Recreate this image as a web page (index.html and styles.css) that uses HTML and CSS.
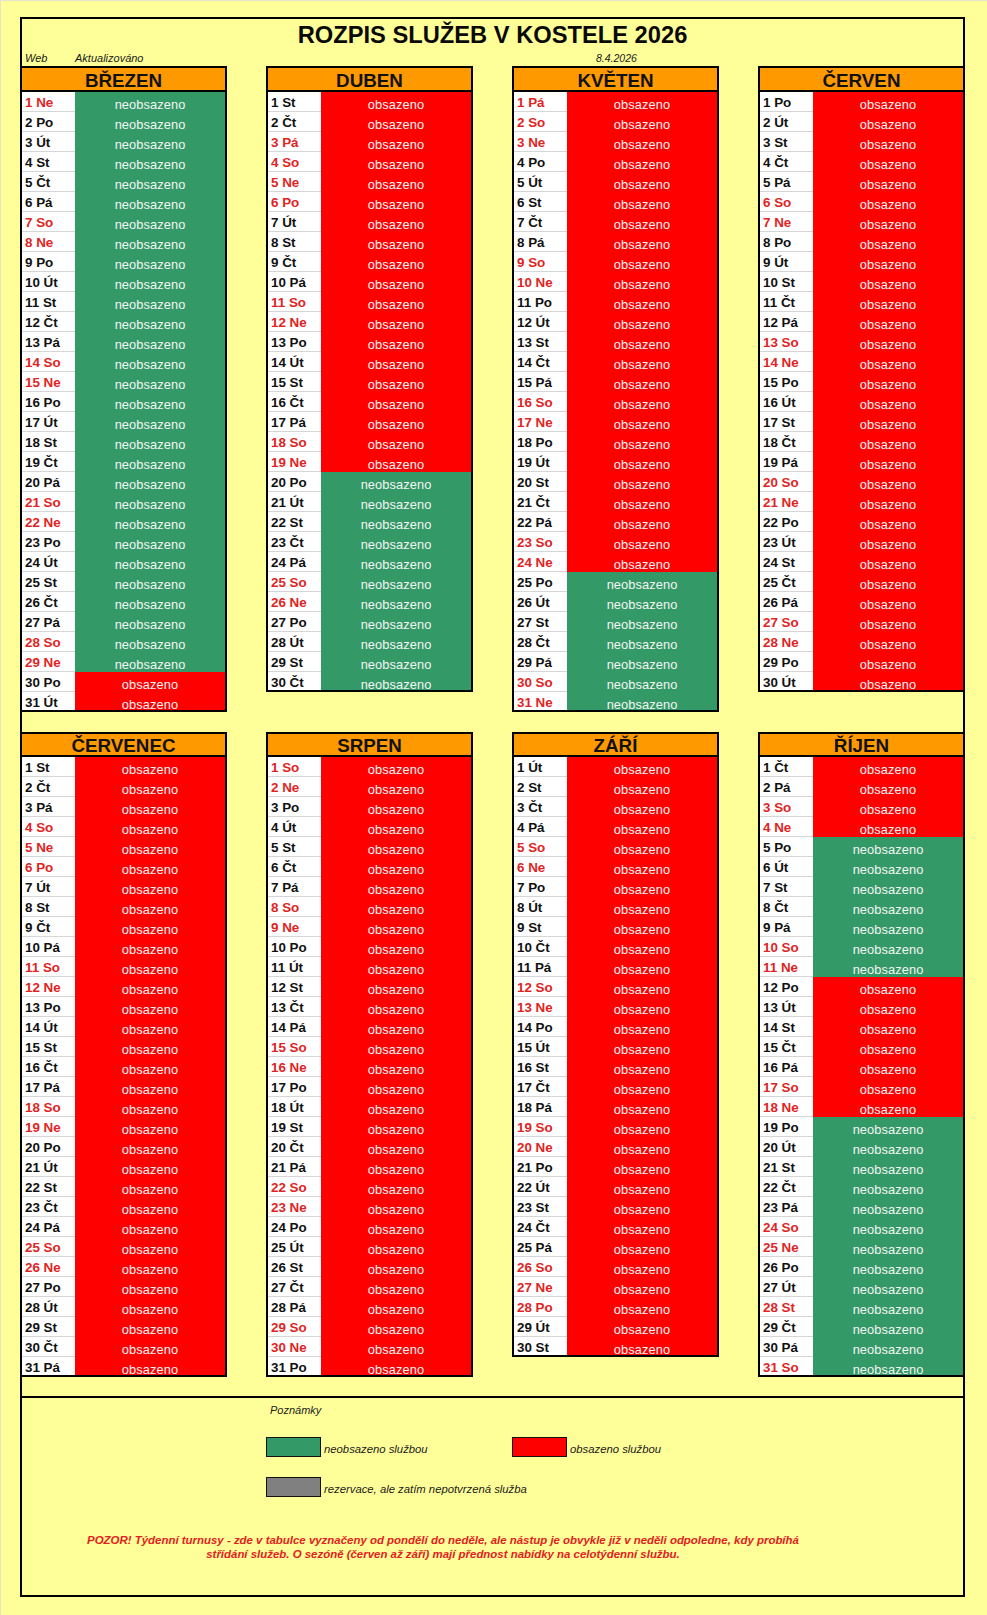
FILE: index.html
```html
<!DOCTYPE html>
<html lang="cs">
<head>
<meta charset="utf-8">
<title>Rozpis služeb v kostele 2026</title>
<link rel="stylesheet" href="styles.css">
</head>
<body>
<div class="page">
<div class="frame">
  <h1 class="title">ROZPIS SLUŽEB V KOSTELE 2026</h1>
  <div class="meta">
    <div class="mcell"><span class="web">Web</span><span class="upd">Aktualizováno</span></div>
    <div class="mcell"></div>
    <div class="mcell"><span class="date">8.4.2026</span></div>
    <div class="mcell"></div>
  </div>

  <div class="months">
    <div class="month">
      <div class="mh">BŘEZEN</div>
      <div class="r"><span class="d w">1 Ne</span><span class="s f">neobsazeno</span></div>
      <div class="r"><span class="d">2 Po</span><span class="s f">neobsazeno</span></div>
      <div class="r"><span class="d">3 Út</span><span class="s f">neobsazeno</span></div>
      <div class="r"><span class="d">4 St</span><span class="s f">neobsazeno</span></div>
      <div class="r"><span class="d">5 Čt</span><span class="s f">neobsazeno</span></div>
      <div class="r"><span class="d">6 Pá</span><span class="s f">neobsazeno</span></div>
      <div class="r"><span class="d w">7 So</span><span class="s f">neobsazeno</span></div>
      <div class="r"><span class="d w">8 Ne</span><span class="s f">neobsazeno</span></div>
      <div class="r"><span class="d">9 Po</span><span class="s f">neobsazeno</span></div>
      <div class="r"><span class="d">10 Út</span><span class="s f">neobsazeno</span></div>
      <div class="r"><span class="d">11 St</span><span class="s f">neobsazeno</span></div>
      <div class="r"><span class="d">12 Čt</span><span class="s f">neobsazeno</span></div>
      <div class="r"><span class="d">13 Pá</span><span class="s f">neobsazeno</span></div>
      <div class="r"><span class="d w">14 So</span><span class="s f">neobsazeno</span></div>
      <div class="r"><span class="d w">15 Ne</span><span class="s f">neobsazeno</span></div>
      <div class="r"><span class="d">16 Po</span><span class="s f">neobsazeno</span></div>
      <div class="r"><span class="d">17 Út</span><span class="s f">neobsazeno</span></div>
      <div class="r"><span class="d">18 St</span><span class="s f">neobsazeno</span></div>
      <div class="r"><span class="d">19 Čt</span><span class="s f">neobsazeno</span></div>
      <div class="r"><span class="d">20 Pá</span><span class="s f">neobsazeno</span></div>
      <div class="r"><span class="d w">21 So</span><span class="s f">neobsazeno</span></div>
      <div class="r"><span class="d w">22 Ne</span><span class="s f">neobsazeno</span></div>
      <div class="r"><span class="d">23 Po</span><span class="s f">neobsazeno</span></div>
      <div class="r"><span class="d">24 Út</span><span class="s f">neobsazeno</span></div>
      <div class="r"><span class="d">25 St</span><span class="s f">neobsazeno</span></div>
      <div class="r"><span class="d">26 Čt</span><span class="s f">neobsazeno</span></div>
      <div class="r"><span class="d">27 Pá</span><span class="s f">neobsazeno</span></div>
      <div class="r"><span class="d w">28 So</span><span class="s f">neobsazeno</span></div>
      <div class="r"><span class="d w">29 Ne</span><span class="s f">neobsazeno</span></div>
      <div class="r"><span class="d">30 Po</span><span class="s b">obsazeno</span></div>
      <div class="r"><span class="d">31 Út</span><span class="s b">obsazeno</span></div>
    </div>

    <div class="month">
      <div class="mh">DUBEN</div>
      <div class="r"><span class="d">1 St</span><span class="s b">obsazeno</span></div>
      <div class="r"><span class="d">2 Čt</span><span class="s b">obsazeno</span></div>
      <div class="r"><span class="d w">3 Pá</span><span class="s b">obsazeno</span></div>
      <div class="r"><span class="d w">4 So</span><span class="s b">obsazeno</span></div>
      <div class="r"><span class="d w">5 Ne</span><span class="s b">obsazeno</span></div>
      <div class="r"><span class="d w">6 Po</span><span class="s b">obsazeno</span></div>
      <div class="r"><span class="d">7 Út</span><span class="s b">obsazeno</span></div>
      <div class="r"><span class="d">8 St</span><span class="s b">obsazeno</span></div>
      <div class="r"><span class="d">9 Čt</span><span class="s b">obsazeno</span></div>
      <div class="r"><span class="d">10 Pá</span><span class="s b">obsazeno</span></div>
      <div class="r"><span class="d w">11 So</span><span class="s b">obsazeno</span></div>
      <div class="r"><span class="d w">12 Ne</span><span class="s b">obsazeno</span></div>
      <div class="r"><span class="d">13 Po</span><span class="s b">obsazeno</span></div>
      <div class="r"><span class="d">14 Út</span><span class="s b">obsazeno</span></div>
      <div class="r"><span class="d">15 St</span><span class="s b">obsazeno</span></div>
      <div class="r"><span class="d">16 Čt</span><span class="s b">obsazeno</span></div>
      <div class="r"><span class="d">17 Pá</span><span class="s b">obsazeno</span></div>
      <div class="r"><span class="d w">18 So</span><span class="s b">obsazeno</span></div>
      <div class="r"><span class="d w">19 Ne</span><span class="s b">obsazeno</span></div>
      <div class="r"><span class="d">20 Po</span><span class="s f">neobsazeno</span></div>
      <div class="r"><span class="d">21 Út</span><span class="s f">neobsazeno</span></div>
      <div class="r"><span class="d">22 St</span><span class="s f">neobsazeno</span></div>
      <div class="r"><span class="d">23 Čt</span><span class="s f">neobsazeno</span></div>
      <div class="r"><span class="d">24 Pá</span><span class="s f">neobsazeno</span></div>
      <div class="r"><span class="d w">25 So</span><span class="s f">neobsazeno</span></div>
      <div class="r"><span class="d w">26 Ne</span><span class="s f">neobsazeno</span></div>
      <div class="r"><span class="d">27 Po</span><span class="s f">neobsazeno</span></div>
      <div class="r"><span class="d">28 Út</span><span class="s f">neobsazeno</span></div>
      <div class="r"><span class="d">29 St</span><span class="s f">neobsazeno</span></div>
      <div class="r"><span class="d">30 Čt</span><span class="s f">neobsazeno</span></div>
    </div>

    <div class="month">
      <div class="mh">KVĚTEN</div>
      <div class="r"><span class="d w">1 Pá</span><span class="s b">obsazeno</span></div>
      <div class="r"><span class="d w">2 So</span><span class="s b">obsazeno</span></div>
      <div class="r"><span class="d w">3 Ne</span><span class="s b">obsazeno</span></div>
      <div class="r"><span class="d">4 Po</span><span class="s b">obsazeno</span></div>
      <div class="r"><span class="d">5 Út</span><span class="s b">obsazeno</span></div>
      <div class="r"><span class="d">6 St</span><span class="s b">obsazeno</span></div>
      <div class="r"><span class="d">7 Čt</span><span class="s b">obsazeno</span></div>
      <div class="r"><span class="d">8 Pá</span><span class="s b">obsazeno</span></div>
      <div class="r"><span class="d w">9 So</span><span class="s b">obsazeno</span></div>
      <div class="r"><span class="d w">10 Ne</span><span class="s b">obsazeno</span></div>
      <div class="r"><span class="d">11 Po</span><span class="s b">obsazeno</span></div>
      <div class="r"><span class="d">12 Út</span><span class="s b">obsazeno</span></div>
      <div class="r"><span class="d">13 St</span><span class="s b">obsazeno</span></div>
      <div class="r"><span class="d">14 Čt</span><span class="s b">obsazeno</span></div>
      <div class="r"><span class="d">15 Pá</span><span class="s b">obsazeno</span></div>
      <div class="r"><span class="d w">16 So</span><span class="s b">obsazeno</span></div>
      <div class="r"><span class="d w">17 Ne</span><span class="s b">obsazeno</span></div>
      <div class="r"><span class="d">18 Po</span><span class="s b">obsazeno</span></div>
      <div class="r"><span class="d">19 Út</span><span class="s b">obsazeno</span></div>
      <div class="r"><span class="d">20 St</span><span class="s b">obsazeno</span></div>
      <div class="r"><span class="d">21 Čt</span><span class="s b">obsazeno</span></div>
      <div class="r"><span class="d">22 Pá</span><span class="s b">obsazeno</span></div>
      <div class="r"><span class="d w">23 So</span><span class="s b">obsazeno</span></div>
      <div class="r"><span class="d w">24 Ne</span><span class="s b">obsazeno</span></div>
      <div class="r"><span class="d">25 Po</span><span class="s f">neobsazeno</span></div>
      <div class="r"><span class="d">26 Út</span><span class="s f">neobsazeno</span></div>
      <div class="r"><span class="d">27 St</span><span class="s f">neobsazeno</span></div>
      <div class="r"><span class="d">28 Čt</span><span class="s f">neobsazeno</span></div>
      <div class="r"><span class="d">29 Pá</span><span class="s f">neobsazeno</span></div>
      <div class="r"><span class="d w">30 So</span><span class="s f">neobsazeno</span></div>
      <div class="r"><span class="d w">31 Ne</span><span class="s f">neobsazeno</span></div>
    </div>

    <div class="month">
      <div class="mh">ČERVEN</div>
      <div class="r"><span class="d">1 Po</span><span class="s b">obsazeno</span></div>
      <div class="r"><span class="d">2 Út</span><span class="s b">obsazeno</span></div>
      <div class="r"><span class="d">3 St</span><span class="s b">obsazeno</span></div>
      <div class="r"><span class="d">4 Čt</span><span class="s b">obsazeno</span></div>
      <div class="r"><span class="d">5 Pá</span><span class="s b">obsazeno</span></div>
      <div class="r"><span class="d w">6 So</span><span class="s b">obsazeno</span></div>
      <div class="r"><span class="d w">7 Ne</span><span class="s b">obsazeno</span></div>
      <div class="r"><span class="d">8 Po</span><span class="s b">obsazeno</span></div>
      <div class="r"><span class="d">9 Út</span><span class="s b">obsazeno</span></div>
      <div class="r"><span class="d">10 St</span><span class="s b">obsazeno</span></div>
      <div class="r"><span class="d">11 Čt</span><span class="s b">obsazeno</span></div>
      <div class="r"><span class="d">12 Pá</span><span class="s b">obsazeno</span></div>
      <div class="r"><span class="d w">13 So</span><span class="s b">obsazeno</span></div>
      <div class="r"><span class="d w">14 Ne</span><span class="s b">obsazeno</span></div>
      <div class="r"><span class="d">15 Po</span><span class="s b">obsazeno</span></div>
      <div class="r"><span class="d">16 Út</span><span class="s b">obsazeno</span></div>
      <div class="r"><span class="d">17 St</span><span class="s b">obsazeno</span></div>
      <div class="r"><span class="d">18 Čt</span><span class="s b">obsazeno</span></div>
      <div class="r"><span class="d">19 Pá</span><span class="s b">obsazeno</span></div>
      <div class="r"><span class="d w">20 So</span><span class="s b">obsazeno</span></div>
      <div class="r"><span class="d w">21 Ne</span><span class="s b">obsazeno</span></div>
      <div class="r"><span class="d">22 Po</span><span class="s b">obsazeno</span></div>
      <div class="r"><span class="d">23 Út</span><span class="s b">obsazeno</span></div>
      <div class="r"><span class="d">24 St</span><span class="s b">obsazeno</span></div>
      <div class="r"><span class="d">25 Čt</span><span class="s b">obsazeno</span></div>
      <div class="r"><span class="d">26 Pá</span><span class="s b">obsazeno</span></div>
      <div class="r"><span class="d w">27 So</span><span class="s b">obsazeno</span></div>
      <div class="r"><span class="d w">28 Ne</span><span class="s b">obsazeno</span></div>
      <div class="r"><span class="d">29 Po</span><span class="s b">obsazeno</span></div>
      <div class="r"><span class="d">30 Út</span><span class="s b">obsazeno</span></div>
    </div>
  </div>

  <div class="months block2">
    <div class="month">
      <div class="mh">ČERVENEC</div>
      <div class="r"><span class="d">1 St</span><span class="s b">obsazeno</span></div>
      <div class="r"><span class="d">2 Čt</span><span class="s b">obsazeno</span></div>
      <div class="r"><span class="d">3 Pá</span><span class="s b">obsazeno</span></div>
      <div class="r"><span class="d w">4 So</span><span class="s b">obsazeno</span></div>
      <div class="r"><span class="d w">5 Ne</span><span class="s b">obsazeno</span></div>
      <div class="r"><span class="d w">6 Po</span><span class="s b">obsazeno</span></div>
      <div class="r"><span class="d">7 Út</span><span class="s b">obsazeno</span></div>
      <div class="r"><span class="d">8 St</span><span class="s b">obsazeno</span></div>
      <div class="r"><span class="d">9 Čt</span><span class="s b">obsazeno</span></div>
      <div class="r"><span class="d">10 Pá</span><span class="s b">obsazeno</span></div>
      <div class="r"><span class="d w">11 So</span><span class="s b">obsazeno</span></div>
      <div class="r"><span class="d w">12 Ne</span><span class="s b">obsazeno</span></div>
      <div class="r"><span class="d">13 Po</span><span class="s b">obsazeno</span></div>
      <div class="r"><span class="d">14 Út</span><span class="s b">obsazeno</span></div>
      <div class="r"><span class="d">15 St</span><span class="s b">obsazeno</span></div>
      <div class="r"><span class="d">16 Čt</span><span class="s b">obsazeno</span></div>
      <div class="r"><span class="d">17 Pá</span><span class="s b">obsazeno</span></div>
      <div class="r"><span class="d w">18 So</span><span class="s b">obsazeno</span></div>
      <div class="r"><span class="d w">19 Ne</span><span class="s b">obsazeno</span></div>
      <div class="r"><span class="d">20 Po</span><span class="s b">obsazeno</span></div>
      <div class="r"><span class="d">21 Út</span><span class="s b">obsazeno</span></div>
      <div class="r"><span class="d">22 St</span><span class="s b">obsazeno</span></div>
      <div class="r"><span class="d">23 Čt</span><span class="s b">obsazeno</span></div>
      <div class="r"><span class="d">24 Pá</span><span class="s b">obsazeno</span></div>
      <div class="r"><span class="d w">25 So</span><span class="s b">obsazeno</span></div>
      <div class="r"><span class="d w">26 Ne</span><span class="s b">obsazeno</span></div>
      <div class="r"><span class="d">27 Po</span><span class="s b">obsazeno</span></div>
      <div class="r"><span class="d">28 Út</span><span class="s b">obsazeno</span></div>
      <div class="r"><span class="d">29 St</span><span class="s b">obsazeno</span></div>
      <div class="r"><span class="d">30 Čt</span><span class="s b">obsazeno</span></div>
      <div class="r"><span class="d">31 Pá</span><span class="s b">obsazeno</span></div>
    </div>

    <div class="month">
      <div class="mh">SRPEN</div>
      <div class="r"><span class="d w">1 So</span><span class="s b">obsazeno</span></div>
      <div class="r"><span class="d w">2 Ne</span><span class="s b">obsazeno</span></div>
      <div class="r"><span class="d">3 Po</span><span class="s b">obsazeno</span></div>
      <div class="r"><span class="d">4 Út</span><span class="s b">obsazeno</span></div>
      <div class="r"><span class="d">5 St</span><span class="s b">obsazeno</span></div>
      <div class="r"><span class="d">6 Čt</span><span class="s b">obsazeno</span></div>
      <div class="r"><span class="d">7 Pá</span><span class="s b">obsazeno</span></div>
      <div class="r"><span class="d w">8 So</span><span class="s b">obsazeno</span></div>
      <div class="r"><span class="d w">9 Ne</span><span class="s b">obsazeno</span></div>
      <div class="r"><span class="d">10 Po</span><span class="s b">obsazeno</span></div>
      <div class="r"><span class="d">11 Út</span><span class="s b">obsazeno</span></div>
      <div class="r"><span class="d">12 St</span><span class="s b">obsazeno</span></div>
      <div class="r"><span class="d">13 Čt</span><span class="s b">obsazeno</span></div>
      <div class="r"><span class="d">14 Pá</span><span class="s b">obsazeno</span></div>
      <div class="r"><span class="d w">15 So</span><span class="s b">obsazeno</span></div>
      <div class="r"><span class="d w">16 Ne</span><span class="s b">obsazeno</span></div>
      <div class="r"><span class="d">17 Po</span><span class="s b">obsazeno</span></div>
      <div class="r"><span class="d">18 Út</span><span class="s b">obsazeno</span></div>
      <div class="r"><span class="d">19 St</span><span class="s b">obsazeno</span></div>
      <div class="r"><span class="d">20 Čt</span><span class="s b">obsazeno</span></div>
      <div class="r"><span class="d">21 Pá</span><span class="s b">obsazeno</span></div>
      <div class="r"><span class="d w">22 So</span><span class="s b">obsazeno</span></div>
      <div class="r"><span class="d w">23 Ne</span><span class="s b">obsazeno</span></div>
      <div class="r"><span class="d">24 Po</span><span class="s b">obsazeno</span></div>
      <div class="r"><span class="d">25 Út</span><span class="s b">obsazeno</span></div>
      <div class="r"><span class="d">26 St</span><span class="s b">obsazeno</span></div>
      <div class="r"><span class="d">27 Čt</span><span class="s b">obsazeno</span></div>
      <div class="r"><span class="d">28 Pá</span><span class="s b">obsazeno</span></div>
      <div class="r"><span class="d w">29 So</span><span class="s b">obsazeno</span></div>
      <div class="r"><span class="d w">30 Ne</span><span class="s b">obsazeno</span></div>
      <div class="r"><span class="d">31 Po</span><span class="s b">obsazeno</span></div>
    </div>

    <div class="month">
      <div class="mh">ZÁŘÍ</div>
      <div class="r"><span class="d">1 Út</span><span class="s b">obsazeno</span></div>
      <div class="r"><span class="d">2 St</span><span class="s b">obsazeno</span></div>
      <div class="r"><span class="d">3 Čt</span><span class="s b">obsazeno</span></div>
      <div class="r"><span class="d">4 Pá</span><span class="s b">obsazeno</span></div>
      <div class="r"><span class="d w">5 So</span><span class="s b">obsazeno</span></div>
      <div class="r"><span class="d w">6 Ne</span><span class="s b">obsazeno</span></div>
      <div class="r"><span class="d">7 Po</span><span class="s b">obsazeno</span></div>
      <div class="r"><span class="d">8 Út</span><span class="s b">obsazeno</span></div>
      <div class="r"><span class="d">9 St</span><span class="s b">obsazeno</span></div>
      <div class="r"><span class="d">10 Čt</span><span class="s b">obsazeno</span></div>
      <div class="r"><span class="d">11 Pá</span><span class="s b">obsazeno</span></div>
      <div class="r"><span class="d w">12 So</span><span class="s b">obsazeno</span></div>
      <div class="r"><span class="d w">13 Ne</span><span class="s b">obsazeno</span></div>
      <div class="r"><span class="d">14 Po</span><span class="s b">obsazeno</span></div>
      <div class="r"><span class="d">15 Út</span><span class="s b">obsazeno</span></div>
      <div class="r"><span class="d">16 St</span><span class="s b">obsazeno</span></div>
      <div class="r"><span class="d">17 Čt</span><span class="s b">obsazeno</span></div>
      <div class="r"><span class="d">18 Pá</span><span class="s b">obsazeno</span></div>
      <div class="r"><span class="d w">19 So</span><span class="s b">obsazeno</span></div>
      <div class="r"><span class="d w">20 Ne</span><span class="s b">obsazeno</span></div>
      <div class="r"><span class="d">21 Po</span><span class="s b">obsazeno</span></div>
      <div class="r"><span class="d">22 Út</span><span class="s b">obsazeno</span></div>
      <div class="r"><span class="d">23 St</span><span class="s b">obsazeno</span></div>
      <div class="r"><span class="d">24 Čt</span><span class="s b">obsazeno</span></div>
      <div class="r"><span class="d">25 Pá</span><span class="s b">obsazeno</span></div>
      <div class="r"><span class="d w">26 So</span><span class="s b">obsazeno</span></div>
      <div class="r"><span class="d w">27 Ne</span><span class="s b">obsazeno</span></div>
      <div class="r"><span class="d w">28 Po</span><span class="s b">obsazeno</span></div>
      <div class="r"><span class="d">29 Út</span><span class="s b">obsazeno</span></div>
      <div class="r"><span class="d">30 St</span><span class="s b">obsazeno</span></div>
    </div>

    <div class="month">
      <div class="mh">ŘÍJEN</div>
      <div class="r"><span class="d">1 Čt</span><span class="s b">obsazeno</span></div>
      <div class="r"><span class="d">2 Pá</span><span class="s b">obsazeno</span></div>
      <div class="r"><span class="d w">3 So</span><span class="s b">obsazeno</span></div>
      <div class="r"><span class="d w">4 Ne</span><span class="s b">obsazeno</span></div>
      <div class="r"><span class="d">5 Po</span><span class="s f">neobsazeno</span></div>
      <div class="r"><span class="d">6 Út</span><span class="s f">neobsazeno</span></div>
      <div class="r"><span class="d">7 St</span><span class="s f">neobsazeno</span></div>
      <div class="r"><span class="d">8 Čt</span><span class="s f">neobsazeno</span></div>
      <div class="r"><span class="d">9 Pá</span><span class="s f">neobsazeno</span></div>
      <div class="r"><span class="d w">10 So</span><span class="s f">neobsazeno</span></div>
      <div class="r"><span class="d w">11 Ne</span><span class="s f">neobsazeno</span></div>
      <div class="r"><span class="d">12 Po</span><span class="s b">obsazeno</span></div>
      <div class="r"><span class="d">13 Út</span><span class="s b">obsazeno</span></div>
      <div class="r"><span class="d">14 St</span><span class="s b">obsazeno</span></div>
      <div class="r"><span class="d">15 Čt</span><span class="s b">obsazeno</span></div>
      <div class="r"><span class="d">16 Pá</span><span class="s b">obsazeno</span></div>
      <div class="r"><span class="d w">17 So</span><span class="s b">obsazeno</span></div>
      <div class="r"><span class="d w">18 Ne</span><span class="s b">obsazeno</span></div>
      <div class="r"><span class="d">19 Po</span><span class="s f">neobsazeno</span></div>
      <div class="r"><span class="d">20 Út</span><span class="s f">neobsazeno</span></div>
      <div class="r"><span class="d">21 St</span><span class="s f">neobsazeno</span></div>
      <div class="r"><span class="d">22 Čt</span><span class="s f">neobsazeno</span></div>
      <div class="r"><span class="d">23 Pá</span><span class="s f">neobsazeno</span></div>
      <div class="r"><span class="d w">24 So</span><span class="s f">neobsazeno</span></div>
      <div class="r"><span class="d w">25 Ne</span><span class="s f">neobsazeno</span></div>
      <div class="r"><span class="d">26 Po</span><span class="s f">neobsazeno</span></div>
      <div class="r"><span class="d">27 Út</span><span class="s f">neobsazeno</span></div>
      <div class="r"><span class="d w">28 St</span><span class="s f">neobsazeno</span></div>
      <div class="r"><span class="d">29 Čt</span><span class="s f">neobsazeno</span></div>
      <div class="r"><span class="d">30 Pá</span><span class="s f">neobsazeno</span></div>
      <div class="r"><span class="d w">31 So</span><span class="s f">neobsazeno</span></div>
    </div>
  </div>

  <div class="notes">
    <div class="ngrid">
      <div></div>
      <div class="pz">Poznámky</div>
      <div></div>
      <div></div>
    </div>
    <div class="ngrid lg1">
      <div></div>
      <div class="key"><span class="sw sw-f"></span><span class="kt">neobsazeno službou</span></div>
      <div class="key"><span class="sw sw-b"></span><span class="kt">obsazeno službou</span></div>
      <div></div>
    </div>
    <div class="ngrid lg2">
      <div></div>
      <div class="key"><span class="sw sw-r"></span><span class="kt">rezervace, ale zatím nepotvrzená služba</span></div>
      <div></div>
      <div></div>
    </div>
    <p class="warn">POZOR! Týdenní turnusy - zde v tabulce vyznačeny od pondělí do neděle, ale nástup je obvykle již v neděli odpoledne, kdy probíhá<br>střídání služeb. O sezóně (červen až září) mají přednost nabídky na celotýdenní službu.</p>
  </div>
</div>
</div>
</body>
</html>
```

FILE: styles.css
```css
* {
  box-sizing: border-box;
  margin: 0;
  padding: 0;
}

html, body {
  background: #ffff99;
}

body {
  font-family: "Liberation Sans", Arial, sans-serif;
  color: #000;
}

.page {
  width: 987px;
  min-height: 1615px;
  border-top: 1px solid #e3e3cf;
  border-left: 1px solid #e3e3cf;
  padding: 16px 0 0 19px;
}

.frame {
  width: 945px;
  height: 1580px;
  border: 2px solid #000;
}

.title {
  padding-top: 2px;
  height: 30px;
  line-height: 28px;
  font-size: 23.7px;
  font-weight: 700;
  text-align: center;
  color: #0a0a0a;
}

.meta {
  display: grid;
  grid-template-columns: repeat(4, 207px);
  column-gap: 39px;
  margin: 0 -2px;
  height: 17px;
  padding-top: 2px;
  line-height: 15px;
  font-size: 11px;
  font-style: italic;
  color: #1a1a1a;
}

.mcell {
  display: flex;
  white-space: nowrap;
}

.web {
  width: 55px;
  padding-left: 5px;
}

.date {
  padding-left: 84px;
  font-size: 10.5px;
}

.months {
  display: grid;
  grid-template-columns: repeat(4, 207px);
  column-gap: 39px;
  align-items: start;
  margin: 0 -2px;
}

.block2 {
  margin-top: 20px;
}

.month {
  border: 2px solid #000;
}

.mh {
  height: 24px;
  border-bottom: 2px solid #000;
  background: #ff9900;
  padding-top: 3px;
  line-height: 19px;
  font-size: 18.8px;
  font-weight: 700;
  text-align: center;
  color: #111;
}

.block2 .mh {
  height: 23px;
  padding-top: 2px;
}

.r {
  display: flex;
  height: 20px;
}

.d {
  width: 53px;
  height: 20px;
  background: #fff;
  border-bottom: 1px solid #d6d6d6;
  padding: 2px 0 0 3px;
  line-height: 17px;
  font-size: 13.4px;
  font-weight: 700;
  color: #111;
  white-space: nowrap;
}

.d.w {
  color: #e02424;
}

.s {
  flex: 1;
  height: 20px;
  padding-top: 5px;
  line-height: 15px;
  font-size: 12.8px;
  letter-spacing: 0.1px;
  text-align: center;
  color: #f5f5f5;
}

.s.f {
  background: #339966;
}

.s.b {
  background: #ff0000;
}

.r:last-child {
  height: 18px;
}

.r:last-child .d,
.r:last-child .s {
  height: 18px;
}

.r:last-child .d {
  border-bottom: 0;
}

.notes {
  margin-top: 19px;
  border-top: 2px solid #000;
}

.ngrid {
  display: grid;
  grid-template-columns: repeat(4, 207px);
  column-gap: 39px;
  margin: 0 -2px;
}

.pz {
  height: 20px;
  padding: 4px 0 0 4px;
  line-height: 16px;
  font-size: 11px;
  font-style: italic;
  color: #222;
}

.lg1 {
  margin-top: 19px;
}

.lg2 {
  margin-top: 20px;
}

.key {
  display: flex;
  height: 20px;
  white-space: nowrap;
}

.sw {
  flex: none;
  width: 55px;
  height: 20px;
  border: 1px solid #111;
}

.sw-f {
  background: #339966;
}

.sw-b {
  background: #ff0000;
}

.sw-r {
  background: #808080;
}

.kt {
  margin-left: 3px;
  padding-top: 2px;
  line-height: 20px;
  font-size: 11.3px;
  font-style: italic;
  color: #1a1a1a;
}

.warn {
  margin-top: 36px;
  width: 842px;
  line-height: 14px;
  font-size: 11.45px;
  font-weight: 700;
  font-style: italic;
  text-align: center;
  color: #e42020;
}
```
